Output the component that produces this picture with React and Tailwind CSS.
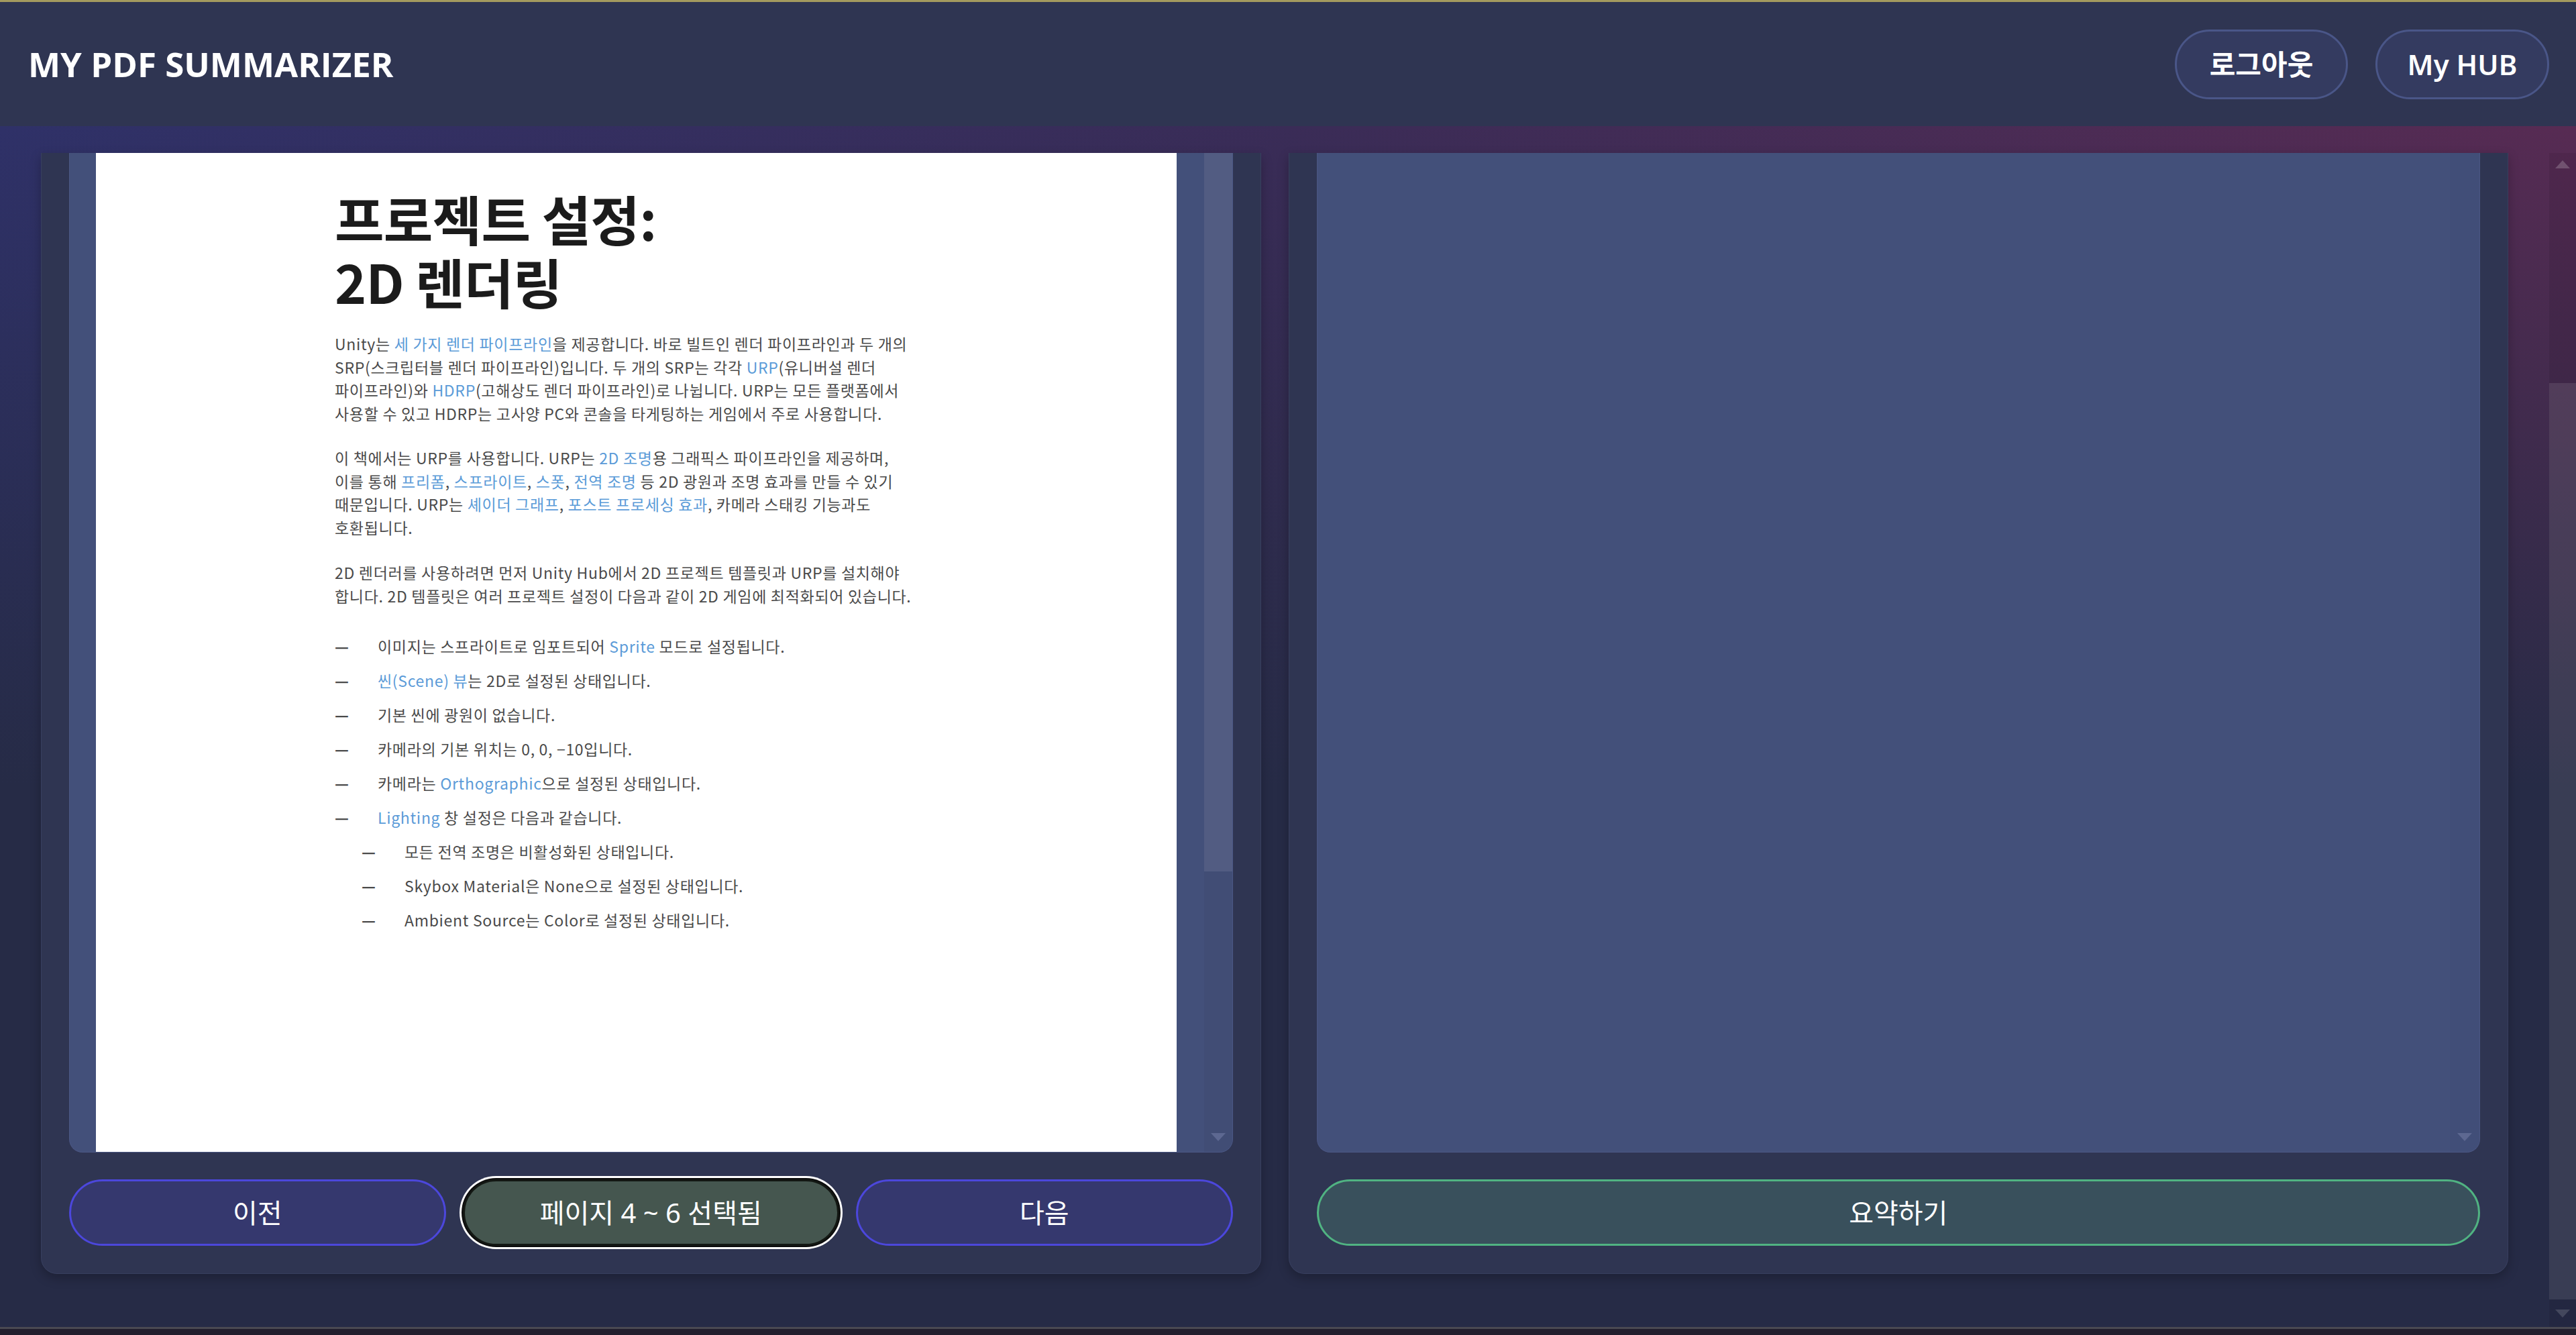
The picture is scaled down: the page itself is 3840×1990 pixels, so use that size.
import React from 'react';

// small scrollbar arrow
function Arrow({ up, className }) {
  return (
    <svg width="22" height="12" viewBox="0 0 22 12" className={className}>
      <polygon points={up ? '11,0 22,12 0,12' : '0,0 22,0 11,12'} fill="currentColor" />
    </svg>
  );
}

// blue link text inside the pdf page
function L({ children }) {
  return <span className="text-[#5b9bd8]">{children}</span>;
}

function Item({ sub, children }) {
  return (
    <div className={`flex leading-[51px] ${sub ? 'pl-[40px]' : ''}`}>
      <span className="w-[64px] shrink-0 font-bold tracking-normal">—</span>
      <span>{children}</span>
    </div>
  );
}

function PdfPage() {
  return (
    <div className="h-full bg-white pl-[356px] pt-[49px] whitespace-nowrap text-[23px] leading-[34.5px] tracking-[0.03em] text-[#4a4a4a] [font-family:'Noto_Sans_CJK_KR',sans-serif]">
      <h2 className="text-[80px] leading-[94px] font-bold tracking-[-0.01em] text-[#1b1b1b]">
        <div>프로젝트 설정:</div>
        <div>2D 렌더링</div>
      </h2>

      <div className="mt-[30px]">
        <div>Unity는 <L>세 가지 렌더 파이프라인</L>을 제공합니다. 바로 빌트인 렌더 파이프라인과 두 개의</div>
        <div>SRP(스크립터블 렌더 파이프라인)입니다. 두 개의 SRP는 각각 <L>URP</L>(유니버설 렌더</div>
        <div>파이프라인)와 <L>HDRP</L>(고해상도 렌더 파이프라인)로 나뉩니다. URP는 모든 플랫폼에서</div>
        <div>사용할 수 있고 HDRP는 고사양 PC와 콘솔을 타게팅하는 게임에서 주로 사용합니다.</div>
      </div>

      <div className="mt-[32px]">
        <div>이 책에서는 URP를 사용합니다. URP는 <L>2D 조명</L>용 그래픽스 파이프라인을 제공하며,</div>
        <div>이를 통해 <L>프리폼</L>, <L>스프라이트</L>, <L>스폿</L>, <L>전역 조명</L> 등 2D 광원과 조명 효과를 만들 수 있기</div>
        <div>때문입니다. URP는 <L>셰이더 그래프</L>, <L>포스트 프로세싱 효과</L>, 카메라 스태킹 기능과도</div>
        <div>호환됩니다.</div>
      </div>

      <div className="mt-[33px]">
        <div>2D 렌더러를 사용하려면 먼저 Unity Hub에서 2D 프로젝트 템플릿과 URP를 설치해야</div>
        <div>합니다. 2D 템플릿은 여러 프로젝트 설정이 다음과 같이 2D 게임에 최적화되어 있습니다.</div>
      </div>

      <div className="mt-[33px]">
        <Item>이미지는 스프라이트로 임포트되어 <L>Sprite</L> 모드로 설정됩니다.</Item>
        <Item><L>씬(Scene) 뷰</L>는 2D로 설정된 상태입니다.</Item>
        <Item>기본 씬에 광원이 없습니다.</Item>
        <Item>카메라의 기본 위치는 0, 0, −10입니다.</Item>
        <Item>카메라는 <L>Orthographic</L>으로 설정된 상태입니다.</Item>
        <Item><L>Lighting</L> 창 설정은 다음과 같습니다.</Item>
        <Item sub>모든 전역 조명은 비활성화된 상태입니다.</Item>
        <Item sub>Skybox Material은 None으로 설정된 상태입니다.</Item>
        <Item sub>Ambient Source는 Color로 설정된 상태입니다.</Item>
      </div>
    </div>
  );
}

export default function App() {
  return (
    <div className="h-[1990px] w-[3840px] flex flex-col overflow-hidden bg-[#262b46] [font-family:'Noto_Sans','Noto_Sans_CJK_KR',sans-serif]">
      <div className="h-[3px] shrink-0 bg-[#a39a5e]" />

      {/* Header */}
      <header className="h-[185px] shrink-0 bg-[#2f3552] flex items-center justify-between pl-[42px] pr-[40px]">
        <h1 className="text-white text-[51px] font-bold [font-family:'Open_Sans','Noto_Sans_CJK_KR',sans-serif]">
          MY PDF SUMMARIZER
        </h1>
        <div className="flex gap-[41px]">
          <button className="w-[258px] h-[104px] rounded-full bg-[#343b60] border-[3px] border-[#4a5688] text-white text-[42px] font-semibold">
            로그아웃
          </button>
          <button className="w-[259px] h-[104px] rounded-full bg-[#343b60] border-[3px] border-[#4a5688] text-white text-[42px] font-semibold">
            My HUB
          </button>
        </div>
      </header>

      {/* Main */}
      <main className="flex-1 min-h-0 flex flex-col pt-[40px] bg-[linear-gradient(to_bottom,transparent,#262b46_55%),linear-gradient(to_right,#2f3168,#3a2c57_50%,#572b53)]">
        <div className="flex-1 min-h-0 flex">
          <div className="flex-1 flex items-start gap-[41px] px-[61px]">
            {/* PDF panel */}
            <section className="flex-1 flex flex-col px-[41px] pb-[41px] bg-[#2f3552] rounded-b-[24px] border-x border-b border-[#383f5f] shadow-[0_6px_16px_rgba(0,0,0,0.25)]">
              <div className="h-[1490px] flex rounded-b-[20px] overflow-hidden bg-[#43507a] border-x border-b border-[#4b5784]">
                <div className="flex-1 pl-[39px] pr-[41px]">
                  <PdfPage />
                </div>
                <div className="w-[42px] flex flex-col bg-[#414d75]">
                  <div className="h-[1071px] bg-[#525c82]" />
                  <div className="flex-1" />
                  <div className="flex justify-center pb-[16px] text-[#5d6891]">
                    <Arrow />
                  </div>
                </div>
              </div>
              <div className="mt-[40px] flex gap-[25px]">
                <button className="flex-1 h-[99px] rounded-full bg-[#35386e] border-[3px] border-[#4c47dc] text-white text-[40px]">
                  이전
                </button>
                <button className="flex-1 h-[99px] rounded-full bg-[#45564f] border-[3px] border-[#131713] shadow-[0_0_0_2px_#0d0d0d,0_0_0_5px_#ffffff] text-white text-[40px]">
                  페이지 4 ~ 6 선택됨
                </button>
                <button className="flex-1 h-[99px] rounded-full bg-[#35386e] border-[3px] border-[#4c47dc] text-white text-[40px]">
                  다음
                </button>
              </div>
            </section>

            {/* Summary panel */}
            <section className="flex-1 flex flex-col px-[41px] pb-[41px] bg-[#2f3552] rounded-b-[24px] border-x border-b border-[#383f5f] shadow-[0_6px_16px_rgba(0,0,0,0.25)]">
              <div className="h-[1490px] flex rounded-b-[20px] overflow-hidden bg-[#43507a] border-x border-b border-[#4b5784]">
                <div className="flex-1" />
                <div className="w-[44px] flex flex-col justify-end bg-[#414e78]">
                  <div className="flex justify-center pb-[16px] text-[#5d6891]">
                    <Arrow />
                  </div>
                </div>
              </div>
              <div className="mt-[40px] flex">
                <button className="flex-1 h-[99px] rounded-full bg-[#39505c] border-[3px] border-[#50b382] text-white text-[40px]">
                  요약하기
                </button>
              </div>
            </section>
          </div>

          {/* page scrollbar */}
          <div className="w-[40px] shrink-0 flex flex-col bg-black/[0.07]">
            <div className="h-[343px] flex justify-center pt-[11px] text-white/20">
              <Arrow up />
            </div>
            <div className="h-[1366px] bg-white/10" />
            <div className="flex-1 flex justify-center items-center text-white/15">
              <Arrow />
            </div>
          </div>
        </div>
      </main>

      <div className="h-[12px] shrink-0 border-t-[3px] border-[#4a4952] bg-[#221e2d]" />
    </div>
  );
}
